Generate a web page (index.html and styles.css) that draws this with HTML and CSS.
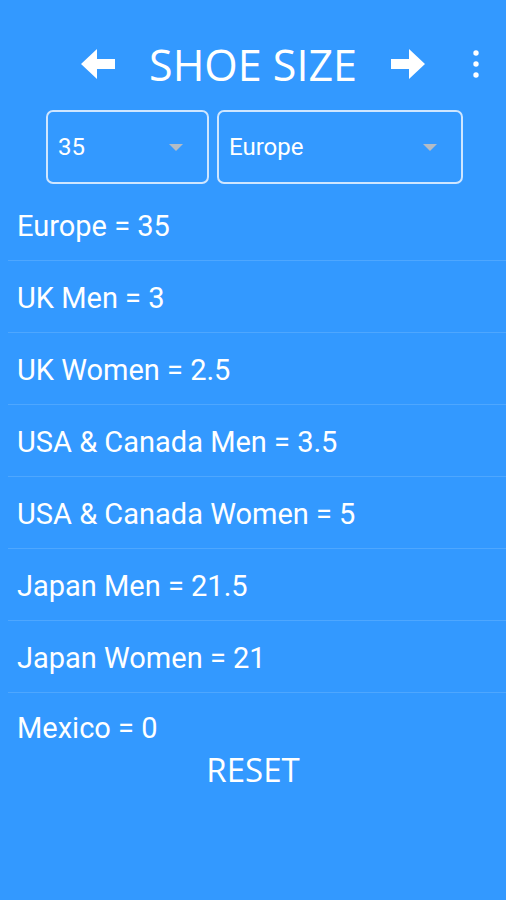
FILE: index.html
```html
<!DOCTYPE html>
<html lang="en">
<head>
    <meta charset="UTF-8">
    <meta name="viewport" content="width=device-width, initial-scale=1.0">
    <title>Shoe Size</title>
    <link rel="stylesheet" href="styles.css">
</head>
<body>

<div class="app">
    <div class="header">
        <div class="title-group">
            <!-- previous / next arrows -->
            <button class="arrow-button">
                <svg width="34" height="30" viewBox="0 0 34 30"><polygon points="0,15 16,0 16,10 34,10 34,20 16,20 16,30" fill="#fff"/></svg>
            </button>
            <h1 class="title">SHOE SIZE</h1>
            <button class="arrow-button">
                <svg width="34" height="30" viewBox="0 0 34 30"><polygon points="34,15 18,0 18,10 0,10 0,20 18,20 18,30" fill="#fff"/></svg>
            </button>
        </div>
        <button class="menu-button">
            <svg width="6" height="28" viewBox="0 0 6 28"><circle cx="3" cy="3" r="2.7" fill="#fff"/><circle cx="3" cy="14" r="2.7" fill="#fff"/><circle cx="3" cy="25" r="2.7" fill="#fff"/></svg>
        </button>
    </div>

    <div class="selects">
        <div class="select select-size">
            <span>35</span>
            <span class="caret"></span>
        </div>
        <div class="select select-region">
            <span>Europe</span>
            <span class="caret"></span>
        </div>
    </div>

    <ul class="results">
        <li>Europe = 35</li>
        <li>UK Men = 3</li>
        <li>UK Women = 2.5</li>
        <li>USA &amp; Canada Men = 3.5</li>
        <li>USA &amp; Canada Women = 5</li>
        <li>Japan Men = 21.5</li>
        <li>Japan Women = 21</li>
        <li class="last">Mexico = 0</li>
    </ul>

    <div class="reset">RESET</div>
</div>

</body>
</html>
```

FILE: styles.css
```css
* {
    box-sizing: border-box;
}

body {
    margin: 0;
    padding: 0;
    background-color: #3399ff;
    color: #fff;
    font-family: Roboto, "Liberation Sans", sans-serif;
    height: 100vh;
}

.app {
    width: 100%;
}

.header {
    display: grid;
    grid-template-columns: 1fr auto 1fr;
    align-items: center;
    height: 68px;
    margin-top: 30px;
}

.title-group {
    grid-column: 2;
    display: flex;
    align-items: center;
    gap: 34px;
}

.title {
    margin: 0;
    font-family: "Open Sans", sans-serif;
    font-weight: 400;
    font-size: 43px;
    line-height: 1;
}

button {
    background: none;
    border: none;
    padding: 0;
    cursor: pointer;
    display: flex;
}

.menu-button {
    justify-self: end;
    margin-right: 27px;
}

.selects {
    display: flex;
    gap: 8px;
    padding-left: 46px;
    margin-top: 12px;
}

.select {
    height: 74px;
    border: 2px solid #cfe6ff;
    border-radius: 7px;
    display: flex;
    align-items: center;
    justify-content: space-between;
    padding: 0 24px 0 10px;
    font-size: 24px;
}

.select-size {
    width: 163px;
}

.select-region {
    width: 246px;
}

/* dropdown triangle */
.caret {
    width: 0;
    height: 0;
    border-left: 7px solid transparent;
    border-right: 7px solid transparent;
    border-top: 7px solid #b3bcc6;
}

.results {
    list-style: none;
    margin: 5px 0 0 8px;
    padding: 0;
}

.results li {
    height: 72px;
    display: flex;
    align-items: center;
    padding: 3px 0 0 9px;
    font-size: 29px;
    border-bottom: 1px solid #4ea7ff;
}

.results li.last {
    height: 57px;
    align-items: flex-start;
    padding-top: 18px;
    border-bottom: none;
}

.reset {
    text-align: center;
    font-family: "Open Sans", sans-serif;
    font-size: 33px;
    line-height: 40px;
}
```
